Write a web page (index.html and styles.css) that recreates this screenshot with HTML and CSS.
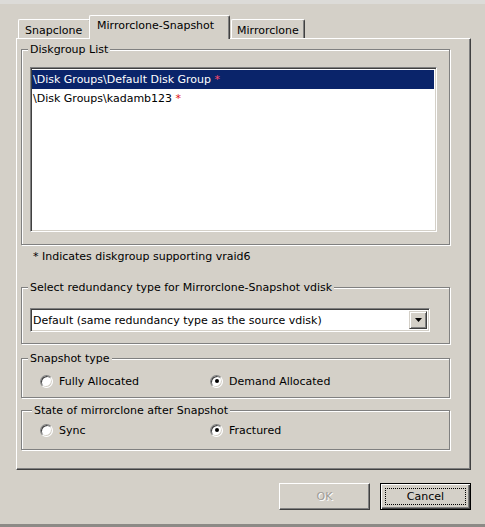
FILE: index.html
```html
<!DOCTYPE html>
<html>
<head>
<meta charset="utf-8">
<link rel="stylesheet" href="styles.css">
</head>
<body>
<div class="window">
  <div class="topstrip"></div>
  <div class="dialog">
    <div class="tabs">
      <div class="tab tab-first">Snapclone</div>
      <div class="tab active">Mirrorclone-Snapshot</div>
      <div class="tab tab-last">Mirrorclone</div>
    </div>
    <div class="panel">
      <fieldset class="group">
        <legend class="legend">Diskgroup List</legend>
        <div class="body-list">
          <div class="listbox">
            <div class="item selected">\Disk Groups\Default Disk Group <span class="star">*</span></div>
            <div class="item">\Disk Groups\kadamb123 <span class="star">*</span></div>
          </div>
        </div>
      </fieldset>
      <div class="note">* Indicates diskgroup supporting vraid6</div>
      <fieldset class="group group-redundancy">
        <legend class="legend">Select redundancy type for Mirrorclone-Snapshot vdisk</legend>
        <div class="body-combo">
          <div class="combo">
            <span class="combo-text">Default (same redundancy type as the source vdisk)</span>
            <span class="combo-btn"><svg width="7" height="4" viewBox="0 0 7 4"><path d="M0 0h7L3.5 4z" fill="#000"/></svg></span>
          </div>
        </div>
      </fieldset>
      <fieldset class="group group-snap">
        <legend class="legend">Snapshot type</legend>
        <div class="body-radios body-snap">
          <label class="radio"><span class="rb"></span>Fully Allocated</label>
          <label class="radio"><span class="rb checked"></span>Demand Allocated</label>
        </div>
      </fieldset>
      <fieldset class="group group-state">
        <legend class="legend legend-state">State of mirrorclone after Snapshot</legend>
        <div class="body-radios body-state">
          <label class="radio"><span class="rb"></span>Sync</label>
          <label class="radio"><span class="rb checked"></span>Fractured</label>
        </div>
      </fieldset>
    </div>
    <div class="buttons">
      <button class="btn btn-disabled">OK</button>
      <button class="btn btn-default"><span class="focus">Cancel</span></button>
    </div>
  </div>
</div>
</body>
</html>
```
FILE: styles.css
```css
html, body {
  margin: 0;
  padding: 0;
}
body {
  background: #d4d0c8;
  font-family: "DejaVu Sans", Verdana, sans-serif;
  font-size: 11px;
  line-height: 13px;
  color: #000;
}
.window {
  width: 485px;
  height: 527px;
  box-sizing: border-box;
  border-bottom: 3px solid #8c8a86;
  overflow: hidden;
}
.topstrip {
  height: 4px;
  background: #dcdbd8;
}
.dialog {
  padding-left: 16px;
  width: 455px;
}
.tabs {
  display: flex;
  align-items: flex-end;
  height: 23px;
  margin-top: 11px;
  padding-left: 2px;
  position: relative;
  z-index: 1;
}
.tab {
  box-sizing: border-box;
  height: 19px;
  border-top: 1px solid #fff;
  border-left: 1px solid #fff;
  border-right: 1px solid #404040;
  box-shadow: inset -1px 0 0 #808080;
  border-radius: 2px 2px 0 0;
  background: #d4d0c8;
  padding: 4px 0 0 6px;
  white-space: nowrap;
}
.tab-first {
  width: 73px;
}
.tab.active {
  width: 141px;
  height: 24px;
  margin-left: -2px;
  margin-bottom: -1px;
  padding: 3px 0 0 7px;
  position: relative;
  z-index: 2;
}
.tab-last {
  width: 74px;
  margin-left: 1px;
  padding-left: 5px;
}
.panel {
  box-sizing: border-box;
  height: 432px;
  width: 455px;
  border: 1px solid;
  border-color: #fff #404040 #404040 #fff;
  box-shadow: inset -1px -1px 0 #808080;
  padding: 4px 20px 0 4px;
}
.group {
  margin: 0;
  padding: 0;
  min-width: 0;
  width: 429px;
  box-sizing: border-box;
  border: 1px solid #808080;
  box-shadow: 1px 1px 0 #fff, inset 1px 1px 0 #fff;
}
.legend {
  padding: 0 2px;
  margin-left: 6px;
  background: #d4d0c8;
  line-height: 13px;
}
.legend-state {
  margin-left: 10px;
}
.body-list {
  padding: 11px 12px 12px 8px;
}
.listbox {
  box-sizing: border-box;
  height: 165px;
  background: #fff;
  border: 1px solid;
  border-color: #808080 #fff #fff #808080;
  box-shadow: inset 1px 1px 0 #404040, inset -1px -1px 0 #d4d0c8;
  padding: 2px 2px 0 1px;
}
.item {
  height: 19px;
  line-height: 19px;
  padding-left: 1px;
  white-space: nowrap;
}
.item.selected {
  background: #0a246a;
  color: #fff;
}
.star {
  color: #e01010;
}
.selected .star {
  color: #ff4a6a;
}
.note {
  margin-top: 5px;
  padding-left: 12px;
}
.group-redundancy {
  margin-top: 18px;
}
.body-combo {
  padding: 14px 19px 11px 8px;
}
.combo {
  box-sizing: border-box;
  height: 24px;
  display: flex;
  align-items: stretch;
  background: #fff;
  border: 1px solid;
  border-color: #808080 #fff #fff #808080;
  box-shadow: inset 1px 1px 0 #404040, inset -1px -1px 0 #d4d0c8;
  padding: 2px 2px 2px 2px;
}
.combo-text {
  flex: 1;
  display: flex;
  align-items: center;
  padding-left: 0;
  white-space: nowrap;
}
.combo-btn {
  box-sizing: border-box;
  width: 18px;
  display: flex;
  align-items: center;
  justify-content: center;
  background: #d4d0c8;
  border: 1px solid;
  border-color: #d4d0c8 #404040 #404040 #d4d0c8;
  box-shadow: inset 1px 1px 0 #fff, inset -1px -1px 0 #808080;
}
.group-snap {
  margin-top: 8px;
}
.group-state {
  margin-top: 6px;
}
.body-radios {
  display: flex;
  padding-left: 18px;
}
.body-snap {
  padding-top: 9px;
  padding-bottom: 9px;
}
.body-state {
  padding-top: 6px;
  padding-bottom: 12px;
}
.radio {
  display: flex;
  align-items: center;
  height: 14px;
  width: 170px;
  gap: 6px;
}
.rb {
  box-sizing: border-box;
  width: 13px;
  height: 13px;
  border-radius: 50%;
  background: #fff;
  border: 1px solid;
  border-color: #808080 #fff #fff #808080;
  box-shadow: inset 1px 1px 0 #404040, inset -1px -1px 0 #d4d0c8;
  display: flex;
  align-items: center;
  justify-content: center;
}
.rb.checked::after {
  content: "";
  width: 4px;
  height: 4px;
  border-radius: 50%;
  background: #000;
}
.buttons {
  display: flex;
  justify-content: flex-end;
  gap: 10px;
  margin-top: 13px;
}
.btn {
  box-sizing: border-box;
  width: 91px;
  height: 27px;
  margin: 0;
  padding: 0;
  font: inherit;
  background: #d4d0c8;
  border: 1px solid;
  border-color: #fff #404040 #404040 #fff;
  box-shadow: inset -1px -1px 0 #808080;
  color: #000;
}
.btn-disabled {
  color: #a09c96;
  text-shadow: 1px 1px 0 #fff;
}
.btn-default {
  border: 1px solid #000;
  box-shadow: inset 1px 1px 0 #fff, inset -1px -1px 0 #404040, inset -2px -2px 0 #808080;
  padding: 4px;
}
.focus {
  display: flex;
  align-items: center;
  justify-content: center;
  height: 100%;
  border: 1px dotted #000;
  box-sizing: border-box;
}
```
